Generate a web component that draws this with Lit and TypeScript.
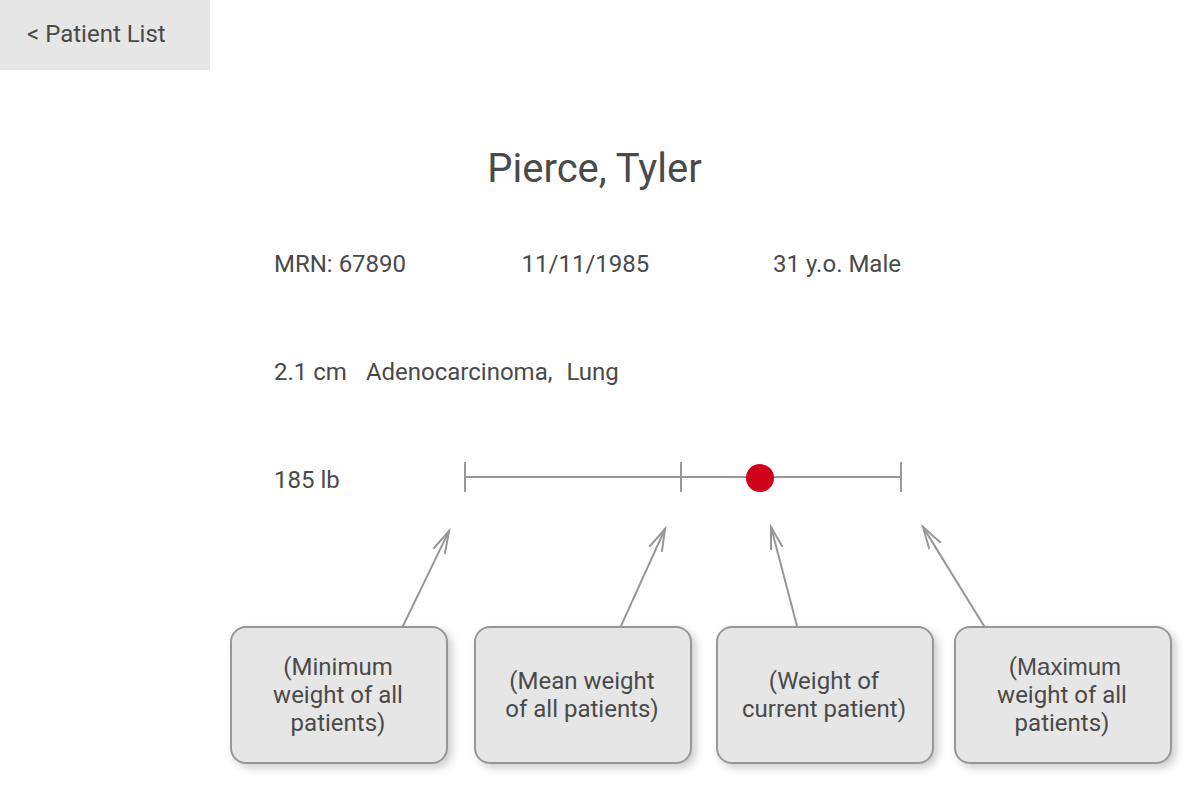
import { LitElement, html, css, svg, TemplateResult } from "lit";
import { customElement, property } from "lit/decorators.js";

@customElement("weight-scale")
class WeightScale extends LitElement {
  @property({ type: Number }) mean = 50;
  @property({ type: Number }) value = 50;

  static styles = css`
    :host { display: block; }
    svg { display: block; width: 100%; height: 28px; overflow: visible; }
    line { stroke: #979797; stroke-width: 2; }
    circle { fill: #d0021b; }
  `;

  render() {
    return html`<svg role="img" aria-label="Weight compared with all patients">
      <line x1="0" y1="11" x2="100%" y2="11"></line>
      <line x1="0" y1="-4" x2="0" y2="26"></line>
      <line x1="${this.mean}%" y1="-4" x2="${this.mean}%" y2="26"></line>
      <line x1="100%" y1="-4" x2="100%" y2="26"></line>
      <circle cx="${this.value}%" cy="12" r="14"></circle>
    </svg>`;
  }
}

interface Note {
  lines: (string | TemplateResult)[];
  tip: [number, number];
  tail: number;
  barbs: string;
}

const notes: Note[] = [
  { lines: ["(Minimum", "weight of all", "patients)"], tip: [219, 7], tail: 173, barbs: "M204 24L219 7L215 29" },
  { lines: ["(Mean weight", "of all patients)"], tip: [191, 5], tail: 147, barbs: "M176 22L191 5L188 27" },
  { lines: ["(Weight of", "current patient)"], tip: [55, 3], tail: 81, barbs: "M55 25L55 3L66 22" },
  {
    lines: [html`&nbsp;(<span class="plain">Maximum</span>`, "weight of all", "patients)"],
    tip: [-31, 3],
    tail: 30,
    barbs: "M-25 24L-31 3L-14 18",
  },
];

@customElement("app-root")
class AppRoot extends LitElement {
  static styles = css`
    :host {
      display: block;
      min-height: 100vh;
      background: #fff;
      color: #4a4a4a;
      font: 24px/28px Roboto, sans-serif;
    }
    * { box-sizing: border-box; }
    .back {
      display: flex;
      align-items: center;
      width: 210px;
      height: 70px;
      padding: 0 16px 2px 27px;
      background: #e6e6e6;
      color: inherit;
      text-decoration: none;
    }
    .patient { padding: 75px 299px 0 274px; }
    h1 {
      margin: 0 0 57px;
      font-size: 40px;
      line-height: 48px;
      font-weight: 400;
      text-align: center;
      padding-left: 14px;
    }
    .facts { display: grid; grid-template-columns: 62fr 63fr auto; margin-bottom: 80px; }
    .diagnosis { display: flex; margin-bottom: 80px; }
    .size { margin-right: 19px; }
    .kind { margin-right: 14px; }
    .weight { display: flex; }
    .pounds { width: 191px; flex: none; }
    weight-scale { flex: 1; }
    .notes {
      display: grid;
      grid-template-columns: 244fr 242fr 238fr 218fr;
      padding: 30px 28px 0 230px;
    }
    .callout { width: 218px; }
    .arrow {
      display: block;
      width: 100%;
      height: 102px;
      overflow: visible;
      fill: none;
      stroke: #979797;
      stroke-width: 2;
      stroke-linecap: square;
    }
    .note {
      display: flex;
      align-items: center;
      justify-content: center;
      height: 138px;
      padding-right: 2px;
      text-align: center;
      background: #e6e6e6;
      border: 2px solid #979797;
      border-radius: 16px;
      box-shadow: 4px 4px 8px rgba(0, 0, 0, 0.2);
    }
    .line { display: block; }
    .plain { font-family: "Liberation Sans", Arial, sans-serif; line-height: 0; }
  `;

  render() {
    return html`
      <nav><a class="back" href="#patients">&lt; Patient List</a></nav>
      <main>
        <section class="patient">
          <h1>Pierce, Tyler</h1>
          <div class="facts"><span>MRN: 67890</span><span>11/11/1985</span><span>31 y.o. Male</span></div>
          <div class="diagnosis">
            <span class="size">2.1 cm</span><span class="kind">Adenocarcinoma,</span><span>Lung</span>
          </div>
          <div class="weight">
            <span class="pounds">185 lb</span>
            <weight-scale .mean=${49.54} .value=${67.66}></weight-scale>
          </div>
        </section>
        <section class="notes">
          ${notes.map(
            (n) => html`<div class="callout">
              <svg class="arrow" aria-hidden="true">
                ${svg`<path d="M${n.tail} 102L${n.tip[0]} ${n.tip[1]}"></path><path d=${n.barbs}></path>`}
              </svg>
              <div class="note"><span>${n.lines.map((l) => html`<span class="line">${l}</span>`)}</span></div>
            </div>`
          )}
        </section>
      </main>
    `;
  }
}
